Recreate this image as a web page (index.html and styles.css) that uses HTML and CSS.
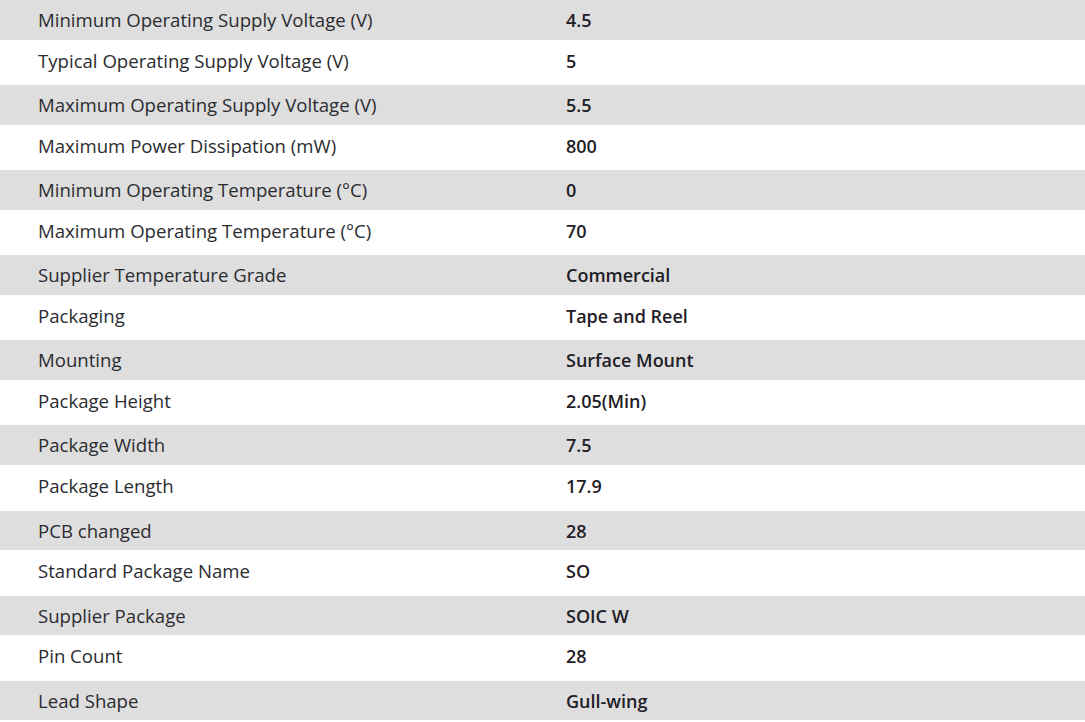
FILE: index.html
```html
<!DOCTYPE html>
<html>
<head>
<meta charset="utf-8">
<link rel="stylesheet" href="styles.css">
</head>
<body>
<div class="specs">
  <div class="row"><div class="label">Minimum Operating Supply Voltage (V)</div><div class="value">4.5</div></div>
  <div class="row"><div class="label">Typical Operating Supply Voltage (V)</div><div class="value">5</div></div>
  <div class="row"><div class="label">Maximum Operating Supply Voltage (V)</div><div class="value">5.5</div></div>
  <div class="row"><div class="label">Maximum Power Dissipation (mW)</div><div class="value">800</div></div>
  <div class="row"><div class="label">Minimum Operating Temperature (°C)</div><div class="value">0</div></div>
  <div class="row"><div class="label">Maximum Operating Temperature (°C)</div><div class="value">70</div></div>
  <div class="row"><div class="label">Supplier Temperature Grade</div><div class="value">Commercial</div></div>
  <div class="row"><div class="label">Packaging</div><div class="value">Tape and Reel</div></div>
  <div class="row"><div class="label">Mounting</div><div class="value">Surface Mount</div></div>
  <div class="row"><div class="label">Package Height</div><div class="value">2.05(Min)</div></div>
  <div class="row"><div class="label">Package Width</div><div class="value">7.5</div></div>
  <div class="row"><div class="label">Package Length</div><div class="value">17.9</div></div>
  <div class="row"><div class="label">PCB changed</div><div class="value">28</div></div>
  <div class="row"><div class="label">Standard Package Name</div><div class="value">SO</div></div>
  <div class="row"><div class="label">Supplier Package</div><div class="value">SOIC W</div></div>
  <div class="row"><div class="label">Pin Count</div><div class="value">28</div></div>
  <div class="row"><div class="label">Lead Shape</div><div class="value">Gull-wing</div></div>
</div>
</body>
</html>
```

FILE: styles.css
```css
html, body {
  margin: 0;
  padding: 0;
  background: #ffffff;
}
body {
  font-family: "Open Sans", "Noto Sans", sans-serif;
  color: #2b2c30;
  overflow: hidden;
}
.specs {
  display: flex;
  flex-direction: column;
}
.row {
  display: grid;
  grid-template-columns: 566px 1fr;
  height: 45.6px;
  box-sizing: border-box;
  padding-top: 9px;
  line-height: 24px;
  font-size: 18.6px;
}
.row:nth-child(odd) {
  background: #dedede;
  height: 39.5px;
  padding-top: 8px;
}
.label {
  padding-left: 38px;
  font-weight: 400;
}
.value {
  font-size: 18px;
  font-weight: 600;
  color: #1f2026;
}
```
